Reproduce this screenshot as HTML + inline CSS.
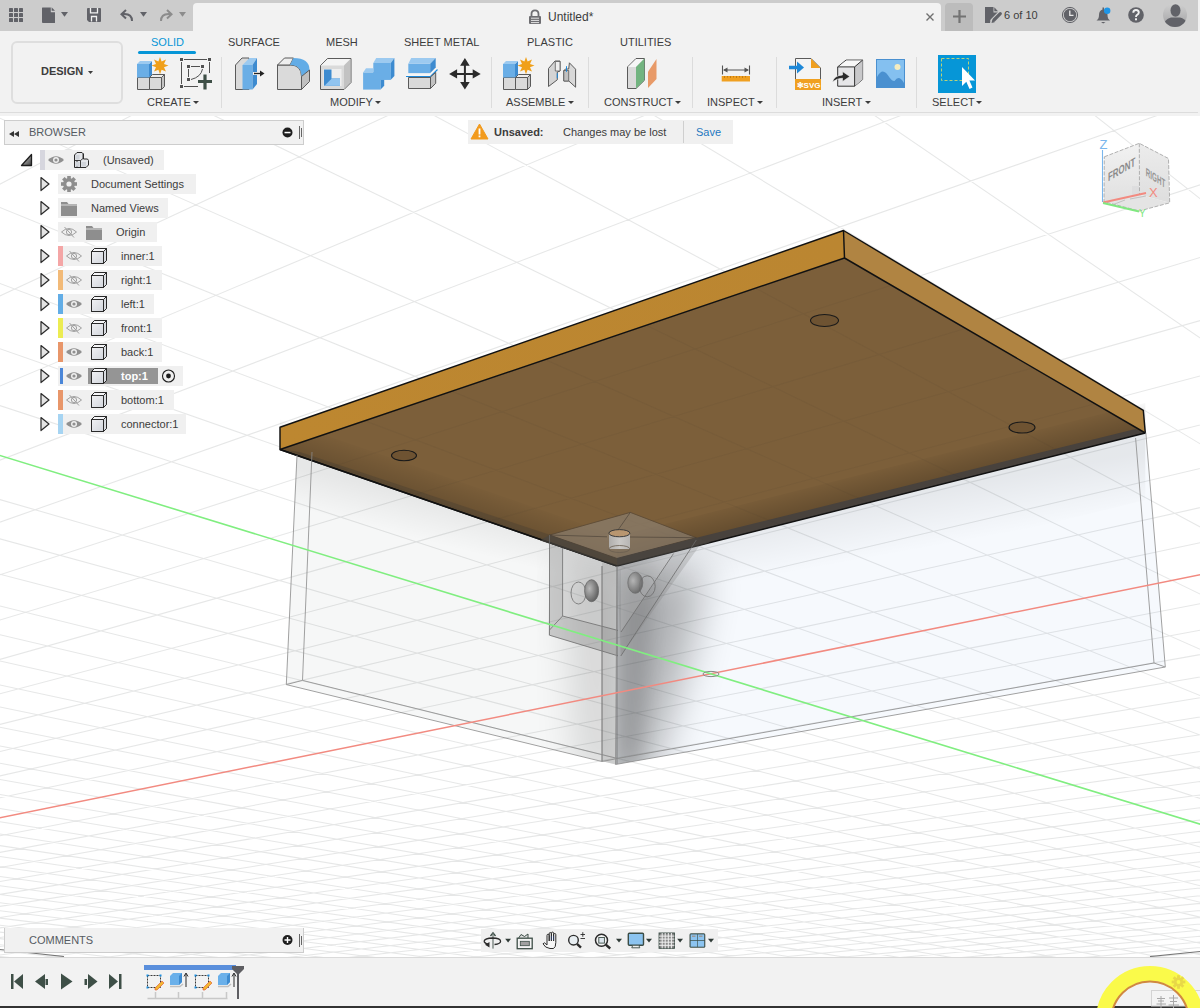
<!DOCTYPE html>
<html><head><meta charset="utf-8">
<style>
*{box-sizing:border-box}
html,body{margin:0;padding:0}
body{width:1200px;height:1008px;overflow:hidden;position:relative;background:#f2f2f2;font-family:"Liberation Sans",sans-serif;color:#3c3c3c}
.a{position:absolute}
.t{position:absolute;white-space:nowrap;line-height:1}
svg{position:absolute;overflow:visible}
</style></head><body>
<!-- top bar -->
<div class="a" style="left:0;top:0;width:1198px;height:31px;background:#cccccc"></div>
<div class="a" style="left:193px;top:3px;width:748px;height:28px;background:#f2f2f2;border-radius:4px 4px 0 0"></div>
<div class="a" style="left:945px;top:3px;width:28px;height:28px;background:#bcbcbc;border-radius:4px 4px 0 0"></div>
<svg width="1200" height="31" style="left:0;top:0">
<g fill="#616268">
<rect x="9" y="8" width="4" height="4" rx="0.6"/><rect x="14" y="8" width="4" height="4" rx="0.6"/><rect x="19" y="8" width="4" height="4" rx="0.6"/>
<rect x="9" y="13" width="4" height="4" rx="0.6"/><rect x="14" y="13" width="4" height="4" rx="0.6"/><rect x="19" y="13" width="4" height="4" rx="0.6"/>
<rect x="9" y="18" width="4" height="4" rx="0.6"/><rect x="14" y="18" width="4" height="4" rx="0.6"/><rect x="19" y="18" width="4" height="4" rx="0.6"/>
<path d="M42.5 7.5H50.8V12.2H55V22.5Q55 23 54.5 23H43Q42 23 42 22.3V8Q42 7.5 42.5 7.5Z"/><path d="M51.6 7.2L55 10.8H51.6Z"/>
<path d="M61 12H68L64.5 16.8Z"/>
<path d="M88 8H100Q101 8 101 9V21Q101 22 100 22H89L87 20V9Q87 8 88 8Z"/>
<path d="M140 12H147L143.5 16.8Z"/>
</g>
<g fill="none" stroke="#f0f0f0" stroke-width="1.3"><path d="M90.5 8V12.8H97.5V8"/><path d="M91.5 21.5V16.5H96.5V21.5"/></g>
<path d="M132 21C132 16.5 129 14 124.5 14H122" fill="none" stroke="#616268" stroke-width="2"/>
<path d="M126 10L121.5 14.2L126 18.4" fill="none" stroke="#616268" stroke-width="2"/>
<path d="M161 21C161 16.5 164 14 168.5 14H171" fill="none" stroke="#8c8c8c" stroke-width="2"/>
<path d="M167 10L171.5 14.2L167 18.4" fill="none" stroke="#8c8c8c" stroke-width="2"/>
<path d="M179 12H186L182.5 16.8Z" fill="#8c8c8c"/>
<!-- lock -->
<path d="M531.5 16.5V14Q531.5 10.3 535 10.3Q538.5 10.3 538.5 14V16.5" fill="none" stroke="#6e6e72" stroke-width="1.8"/>
<rect x="529" y="16" width="12" height="8" rx="1" fill="#6e6e72"/>
<g stroke="#f0f0f0" stroke-width="0.9"><path d="M531 18.2H539M531 20.4H539M531 22.6H539"/></g>
<path d="M926.5 13.5L933.5 20.5M933.5 13.5L926.5 20.5" stroke="#707070" stroke-width="1.4"/>
<path d="M953 16.5H966M959.5 10V23" stroke="#737373" stroke-width="2.2"/>
<!-- doc edit -->
<path d="M985 7H993.5V12.5H998V14.5L990 22.5V23H985Z" fill="#616268"/>
<path d="M994.3 7.2L998 11.2H994.3Z" fill="#616268"/>
<path d="M993 21L1000.5 13.5" stroke="#cccccc" stroke-width="5.4" stroke-linecap="round"/>
<path d="M994 20L1000.3 13.7" stroke="#616268" stroke-width="3.2" stroke-linecap="round"/>
<path d="M991.5 23L992.3 19.8L994.7 22.2Z" fill="#616268"/>
<!-- clock -->
<circle cx="1070" cy="15" r="7.6" fill="none" stroke="#616268" stroke-width="1"/>
<circle cx="1070" cy="15" r="6.2" fill="#616268"/>
<path d="M1069.8 10.5V15.3H1073.5" fill="none" stroke="#e8e8e8" stroke-width="1.3"/>
<!-- bell -->
<path d="M1096.5 20.5Q1099 19 1099 15Q1099 10.5 1102.5 9.5V7.5H1104V9.5Q1107.5 10.5 1107.5 15Q1107.5 19 1110 20.5Z" fill="#616268"/>
<path d="M1101 22H1105.5L1103.2 23.5Z" fill="#616268"/>
<circle cx="1107.2" cy="10.8" r="3.2" fill="#1e95e6"/>
<!-- help -->
<circle cx="1136" cy="15" r="7.8" fill="#616268"/>
<path d="M1133.3 12.8Q1133.3 10 1136 10Q1138.8 10 1138.8 12.6Q1138.8 14 1137.2 14.8Q1136 15.5 1136 17" fill="none" stroke="#f0f0f0" stroke-width="1.9"/>
<rect x="1135" y="18.3" width="2" height="2" fill="#f0f0f0"/>
<!-- avatar -->
<defs><linearGradient id="avg" x1="0" y1="0" x2="0" y2="1"><stop offset="0" stop-color="#d0d0d0"/><stop offset="1" stop-color="#a2a2a4"/></linearGradient>
<clipPath id="avc"><circle cx="1175" cy="15" r="12"/></clipPath></defs>
<circle cx="1175" cy="15" r="12" fill="url(#avg)"/>
<g clip-path="url(#avc)" fill="#616268"><ellipse cx="1175.5" cy="10.5" rx="5" ry="6.2"/><path d="M1163 27Q1164 19 1171 17.5H1180Q1187 19 1188 27Z"/></g>
</svg>
<div class="t" style="left:548px;top:11px;font-size:12px;color:#3c3c3c">Untitled*</div>
<div class="t" style="left:1004px;top:9.6px;font-size:11px;color:#3c3c3c">6 of 10</div>
<!-- toolbar -->
<div class="a" style="left:0;top:112px;width:1198px;height:1px;background:#dcdcdc"></div>
<div class="a" style="left:11px;top:41px;width:112px;height:63px;border:2px solid #dedede;border-radius:6px"></div>
<div class="t" style="left:41px;top:66px;font-size:11px;font-weight:bold;color:#3c3c3c">DESIGN</div>
<div class="t" style="left:151px;top:37px;font-size:11px;color:#0696d7">SOLID</div>
<div class="a" style="left:138px;top:51px;width:58px;height:3px;background:#0696d7;border-radius:2px"></div>
<div class="t" style="left:228px;top:37px;font-size:11px">SURFACE</div>
<div class="t" style="left:326px;top:37px;font-size:11px">MESH</div>
<div class="t" style="left:404px;top:37px;font-size:11px">SHEET METAL</div>
<div class="t" style="left:527px;top:37px;font-size:11px">PLASTIC</div>
<div class="t" style="left:620px;top:37px;font-size:11px">UTILITIES</div>
<div class="t" style="left:147px;top:97px;font-size:11px">CREATE</div>
<div class="t" style="left:330px;top:97px;font-size:11px">MODIFY</div>
<div class="t" style="left:506px;top:97px;font-size:11px">ASSEMBLE</div>
<div class="t" style="left:604px;top:97px;font-size:11px">CONSTRUCT</div>
<div class="t" style="left:707px;top:97px;font-size:11px">INSPECT</div>
<div class="t" style="left:822px;top:97px;font-size:11px">INSERT</div>
<div class="t" style="left:932px;top:97px;font-size:11px">SELECT</div>
<svg width="1200" height="116" style="left:0;top:0">
<g fill="#3c3c3c">
<path d="M88 71H93L90.5 74Z"/>
<path d="M193 101H199L196 104Z"/>
<path d="M375 101H381L378 104Z"/>
<path d="M568 101H574L571 104Z"/>
<path d="M675 101H681L678 104Z"/>
<path d="M757 101H763L760 104Z"/>
<path d="M865 101H871L868 104Z"/>
<path d="M976 101H982L979 104Z"/>
</g>
<g fill="#dcdcdc"><rect x="221" y="57" width="1" height="51"/><rect x="491" y="57" width="1" height="51"/><rect x="588" y="57" width="1" height="51"/><rect x="692" y="57" width="1" height="51"/><rect x="776" y="57" width="1" height="51"/><rect x="916" y="57" width="1" height="51"/></g>
<!-- CREATE: new component -->
<path d="M137.5 89.5V77.5H149.5V89.5Z" fill="#dadada" stroke="#5a5a5a"/>
<path d="M149.5 89.5V77.5H161.5V89.5Z" fill="#dadada" stroke="#5a5a5a"/>
<path d="M149.5 77.5L152.5 74.5H164.5L161.5 77.5Z" fill="#eeeeee" stroke="#5a5a5a" stroke-linejoin="round"/>
<path d="M161.5 77.5L164.5 74.5V86.5L161.5 89.5Z" fill="#c4c4c4" stroke="#5a5a5a" stroke-linejoin="round"/>
<path d="M137 77.5V64L149 64V77.5Z" fill="#6aaee6"/>
<path d="M149 77.5V64L152 61V74.5Z" fill="#3d8bd0"/>
<path d="M137 64L140 61H152L149 64Z" fill="#9ccaf0"/>
<path d="M160 57L161.6 61.5L166 59.6L164 64L168.5 65.6L164 67.2L166 71.6L161.6 69.7L160 74.2L158.4 69.7L154 71.6L156 67.2L151.5 65.6L156 64L154 59.6L158.4 61.5Z" fill="#f0a01a"/>
<!-- sketch -->
<g fill="#505050"><rect x="180" y="58" width="3" height="3"/><rect x="208" y="58" width="3" height="3"/><rect x="180" y="85" width="3" height="3"/><rect x="187" y="65" width="3" height="3"/><rect x="201" y="65" width="3" height="3"/><rect x="187" y="78" width="3" height="3"/></g>
<g fill="none" stroke="#505050" stroke-width="1"><path d="M184 59.5H207M181.5 62V84M209.5 62V73M184 86.5H198M191 66.5H200M188.5 69V77M191 79.5Q201 77 202.5 69"/></g>
<path d="M198 81.5H212M205 74.5V89.5" stroke="#3e4f47" stroke-width="3.2"/>
<!-- MODIFY: press pull -->
<path d="M235.5 89.5V65L242 58H249V89.5Z" fill="#dadada" stroke="#5a5a5a" stroke-linejoin="round"/>
<path d="M242.5 89.5V65H252.5V89.5Z" fill="#6aaee6"/>
<path d="M242.5 65L249.5 58H257L252.5 65Z" fill="#9ccaf0"/>
<path d="M252.5 65L257 58V84L252.5 89.5Z" fill="#3d8bd0"/>
<path d="M253 73.5H261" stroke="#f2f2f2" stroke-width="3"/>
<path d="M254 73.5H261" stroke="#222" stroke-width="1.3"/><path d="M264.5 73.5L260 70.6V76.4Z" fill="#222"/>
<!-- fillet -->
<path d="M277.5 89.5V65H290Q301.5 65 301.5 76.5V89.5Z" fill="#dadada" stroke="#5a5a5a"/>
<path d="M277.5 65L284.5 58H293.5L290 65Z" fill="#eeeeee" stroke="#5a5a5a" stroke-linejoin="round"/>
<path d="M290 65Q301.5 65 301.5 76.5L309.5 70Q309.5 58 293.5 58Z" fill="#62ace6"/>
<path d="M301.5 76.5L309.5 70V81.5L301.5 89.5Z" fill="#c0c0c0" stroke="#5a5a5a" stroke-linejoin="round"/>
<!-- shell -->
<path d="M320.5 89.5V65.5L327.5 58.5H351V82.5L344 89.5Z" fill="#dadada" stroke="#5a5a5a" stroke-linejoin="round"/>
<path d="M321 65.5L327.7 59H350.5L344 65.5Z" fill="#f4f4f4"/>
<path d="M344 65.5L350.5 59V82.3L344 89Z" fill="#c2c2c2"/>
<rect x="323.5" y="69" width="18" height="17" fill="#eeeeee"/>
<path d="M324 69.5H331.5V78.5H340V85.8H324Z" fill="#3d8bd0"/>
<path d="M324.5 85.8L331.8 78.5H340V85.8Z" fill="#90c4f0"/>
<!-- combine -->
<path d="M373.3 80V63H390.8V79.7Z" fill="#6aaee6"/>
<path d="M373.3 63L376.2 58.1H394.4L390.8 63Z" fill="#9ccaf0"/>
<path d="M390.8 63L394.4 58.1V76L390.8 79.7Z" fill="#3d8bd0"/>
<path d="M363.1 89.6V72.4H380.6V89.6Z" fill="#6aaee6"/>
<path d="M363.1 72.4L366 68.3H373.3V72.4Z" fill="#9ccaf0"/>
<path d="M380.6 79.7H384.2V85.8L380.6 89.6Z" fill="#3d8bd0"/>
<rect x="373.3" y="72.4" width="17.5" height="7.3" fill="#6aaee6"/>
<!-- split -->
<path d="M408.3 73.1V63.7H430.2V73.1Z" fill="#6aaee6"/>
<path d="M408.3 63.7L411.2 58.1H435.7L430.2 63.7Z" fill="#9ccaf0"/>
<path d="M430.2 63.7L435.7 58.1V67.5L430.2 73.1Z" fill="#3d8bd0"/>
<path d="M406 75.5H430.5L437.5 68.5" fill="none" stroke="#f8f8f8" stroke-width="2.2"/>
<path d="M406 76.5H430.5L437.5 69.5" fill="none" stroke="#1e88d8" stroke-width="1.2"/>
<path d="M408.5 88.5V77.5H430.5V88.5Z" fill="#dadada" stroke="#5a5a5a"/>
<path d="M430.5 88.5V77L435.7 72.4V83.3Z" fill="#c2c2c2" stroke="#5a5a5a" stroke-linejoin="round"/>
<!-- move -->
<path d="M464.9 63V85M455 73.9H475" stroke="#2b2b2b" stroke-width="2"/>
<path d="M464.9 58.1L460.1 65.8H469.7Z M464.9 89.6L460.1 81.9H469.7Z M449.1 73.9L457.1 69.2V78.6Z M480.7 73.9L472.7 69.2V78.6Z" fill="#2b2b2b"/>
<!-- ASSEMBLE -->
<g transform="translate(366 0)">
<path d="M137.5 89.5V77.5H149.5V89.5Z" fill="#dadada" stroke="#5a5a5a"/>
<path d="M149.5 89.5V77.5H161.5V89.5Z" fill="#dadada" stroke="#5a5a5a"/>
<path d="M149.5 77.5L152.5 74.5H164.5L161.5 77.5Z" fill="#eeeeee" stroke="#5a5a5a" stroke-linejoin="round"/>
<path d="M161.5 77.5L164.5 74.5V86.5L161.5 89.5Z" fill="#c4c4c4" stroke="#5a5a5a" stroke-linejoin="round"/>
<path d="M137 77.5V64L149 64V77.5Z" fill="#6aaee6"/>
<path d="M149 77.5V64L152 61V74.5Z" fill="#3d8bd0"/>
<path d="M137 64L140 61H152L149 64Z" fill="#9ccaf0"/>
<path d="M160 57L161.6 61.5L166 59.6L164 64L168.5 65.6L164 67.2L166 71.6L161.6 69.7L160 74.2L158.4 69.7L154 71.6L156 67.2L151.5 65.6L156 64L154 59.6L158.4 61.5Z" fill="#f0a01a"/>
</g>
<!-- joint -->
<path d="M548.5 86.5V68.5L555 61H560V71L557.3 72V79.8Z" fill="#d4d4d4" stroke="#5a5a5a" stroke-linejoin="round"/>
<path d="M555.3 61.5H560V71H555.3Z" fill="#eeeeee" stroke="#5a5a5a" stroke-width="0.8"/>
<path d="M557.3 73.2V78.2" stroke="#1e88d8" stroke-width="1"/>
<path d="M569.4 62.8L575.6 69.2V87.2L568.8 81H563.8V70.5L565.8 69H568.7Z" fill="#d8d8d8" stroke="#5a5a5a" stroke-linejoin="round"/>
<path d="M563.8 70.5H568.7V81H563.8Z" fill="#c0c0c0" stroke="#5a5a5a" stroke-width="0.8"/>
<path d="M566.5 66.2V71.8" stroke="#1e88d8" stroke-width="1"/>
<!-- CONSTRUCT -->
<path d="M627.5 88.5V67L636 58.5H644.4V80.3L636 88.5Z" fill="#dadada" stroke="#5a5a5a" stroke-linejoin="round"/>
<path d="M628 67L636.2 59H644L636 67Z" fill="#f6f6f6"/>
<path d="M636 88.5V67L644.4 58.5V80.3Z" fill="#72b480"/>
<path d="M648 88V71.8L656.5 59.1V78.9Z" fill="#e89a68"/>
<!-- INSPECT -->
<path d="M722.5 65.5V74.5M749.5 65.5V74.5M724 70H748" stroke="#555" stroke-width="1.1"/>
<path d="M723 70L727.5 67.5V72.5ZM749 70L744.5 67.5V72.5Z" fill="#555"/>
<rect x="721.7" y="76" width="28.3" height="5.5" fill="#f0a020"/>
<g stroke="#b87410" stroke-width="0.8"><path d="M724.5 76V78M727.5 76V77.5M730.5 76V78M733.5 76V77.5M736.5 76V78M739.5 76V77.5M742.5 76V78M745.5 76V77.5"/></g>
<!-- INSERT svg -->
<path d="M795.5 80V58.5H811L820.5 68V80" fill="#f4f4f4" stroke="#5a5a5a"/>
<path d="M811 58.5L820.5 68H811Z" fill="#f0a020"/>
<rect x="795" y="79" width="26" height="11" fill="#f0a020"/>
<text x="808.5" y="88" font-size="8" font-weight="bold" fill="#fff" text-anchor="middle" font-family="Liberation Sans">✻SVG</text>
<path d="M789 67.5H798" stroke="#1e88d8" stroke-width="3.5"/><path d="M797 61.5L804 67.5L797 73.5Z" fill="#1e88d8"/>
<!-- insert mesh -->
<path d="M837.7 86.2V66.9L846 60.1H862.6V79.5L854.6 86.2Z" fill="#e6e6e8" stroke="#333" stroke-linejoin="round"/>
<path d="M838.2 66.9L846.2 60.6H862L854.6 66.9Z" fill="#f8f8f8"/>
<path d="M854.6 86.2V66.9L862.6 60.1V79.5Z" fill="#c8c8ca"/>
<path d="M837.7 66.9H854.6V86.2M854.6 66.9L862.6 60.1" fill="none" stroke="#333" stroke-linejoin="round"/>
<path d="M832.5 82Q834 75.5 842.5 75V71.5L849.8 76.5L842.5 81.5V78.2Q836.5 78.5 832.5 82Z" fill="#2b2b2b" stroke="#f2f2f2" stroke-width="0.6"/>
<!-- image -->
<rect x="876.5" y="59.5" width="28" height="28" fill="#84c0f0" stroke="#4a90d0" stroke-width="1"/>
<path d="M877 87V77Q880 71.5 882.8 71.5Q886 71.5 889.5 77.5Q892.5 81.5 894.5 81Q896.5 78 898.5 78Q901 78 904 83V87Z" fill="#4a90d0"/>
<circle cx="897.5" cy="67" r="3" fill="#f4ecc0"/>
<!-- SELECT -->
<rect x="938" y="55" width="38" height="38" fill="#0696d7"/>
<rect x="941.5" y="58.5" width="27" height="22" fill="none" stroke="#b8d27a" stroke-width="1" stroke-dasharray="3 2"/>
<path d="M962 67V86L966.3 81.7L969.5 89L972.5 87.6L969.4 80.5H975Z" fill="#fff"/>
</svg>
<!-- viewport -->
<svg width="1200" height="841" viewBox="0 116 1200 841" style="left:0;top:116px;overflow:hidden">
<defs>
<linearGradient id="gBR" gradientUnits="userSpaceOnUse" x1="617" y1="0" x2="725" y2="0">
<stop offset="0" stop-color="#000" stop-opacity="0.42"/><stop offset="0.2" stop-color="#000" stop-opacity="0.33"/><stop offset="0.5" stop-color="#000" stop-opacity="0.12"/><stop offset="1" stop-color="#000" stop-opacity="0"/>
</linearGradient>
<linearGradient id="gBL" gradientUnits="userSpaceOnUse" x1="602" y1="0" x2="540" y2="0">
<stop offset="0" stop-color="#000" stop-opacity="0.2"/><stop offset="0.5" stop-color="#000" stop-opacity="0.07"/><stop offset="1" stop-color="#000" stop-opacity="0"/>
</linearGradient>
<linearGradient id="gV" gradientUnits="userSpaceOnUse" x1="0" y1="560" x2="0" y2="770">
<stop offset="0" stop-color="#fff"/><stop offset="0.5" stop-color="#fff" stop-opacity="0.9"/><stop offset="1" stop-color="#fff" stop-opacity="0.7"/>
</linearGradient>
<mask id="mV"><rect x="0" y="116" width="1200" height="839" fill="url(#gV)"/></mask>
<linearGradient id="gTop" gradientUnits="userSpaceOnUse" x1="0" y1="0" x2="0" y2="1">
<stop offset="0" stop-color="#000" stop-opacity="0.14"/><stop offset="1" stop-color="#000" stop-opacity="0"/>
</linearGradient>
<linearGradient id="gTL" gradientUnits="userSpaceOnUse" x1="450" y1="505" x2="440" y2="545">
<stop offset="0" stop-color="#000" stop-opacity="0.13"/><stop offset="1" stop-color="#000" stop-opacity="0"/>
</linearGradient>
<linearGradient id="gTR" gradientUnits="userSpaceOnUse" x1="880" y1="500" x2="890" y2="555">
<stop offset="0" stop-color="#000" stop-opacity="0.1"/><stop offset="1" stop-color="#000" stop-opacity="0"/>
</linearGradient>
<linearGradient id="bot" gradientUnits="userSpaceOnUse" x1="700" y1="280" x2="640" y2="540">
<stop offset="0" stop-color="#7b5d38"/><stop offset="0.7" stop-color="#775a37"/><stop offset="1" stop-color="#6a5237"/>
</linearGradient>
<linearGradient id="sideL" gradientUnits="userSpaceOnUse" x1="280" y1="0" x2="844" y2="0">
<stop offset="0" stop-color="#bd8730"/><stop offset="1" stop-color="#bb8631"/>
</linearGradient>
<linearGradient id="gEdgeR" gradientUnits="userSpaceOnUse" x1="880" y1="465" x2="888.7" y2="500">
<stop offset="0" stop-color="#000" stop-opacity="0"/><stop offset="1" stop-color="#000" stop-opacity="0.24"/>
</linearGradient>
<linearGradient id="gEdgeL" gradientUnits="userSpaceOnUse" x1="460" y1="478" x2="449.7" y2="508">
<stop offset="0" stop-color="#000" stop-opacity="0"/><stop offset="1" stop-color="#000" stop-opacity="0.16"/>
</linearGradient>
<clipPath id="cPL"><path d="M280 449.5L844.5 258L1145.3 433L617 566Z"/></clipPath>
<clipPath id="cBW"><path d="M617 566L1145.3 433L1165.3 667L615.5 764.5Z"/></clipPath>
<clipPath id="cLW"><path d="M297 455.4L617 566L615.5 764.5L286.3 684.6Z"/></clipPath>
</defs>
<rect x="0" y="116" width="1200" height="841" fill="#fff"/>
<!-- walls -->
<path d="M617 566L1145.3 433L1165.3 667L615.5 764.5Z" fill="#f6f9fd"/>
<path d="M297 455.4L617 566L615.5 764.5L286.3 684.6Z" fill="#f6f7f7"/>
<!-- shadows -->
<defs><filter id="blur1" x="-50%" y="-50%" width="200%" height="200%"><feGaussianBlur stdDeviation="20"/></filter>
<filter id="blur2" x="-50%" y="-50%" width="200%" height="200%"><feGaussianBlur stdDeviation="9"/></filter></defs>
<g clip-path="url(#cBW)">
<path d="M605 570L705 570L690 650L650 780L605 780Z" fill="#000" opacity="0.29" filter="url(#blur1)"/>
<path d="M612 560L655 560L640 780L612 780Z" fill="#000" opacity="0.14" filter="url(#blur2)"/>
</g>
<g clip-path="url(#cLW)">
<path d="M565 560L620 560L620 780L580 780Z" fill="#000" opacity="0.14" filter="url(#blur1)"/>
<rect x="602" y="430" width="16" height="340" fill="#000" opacity="0.1"/>
</g>
<g clip-path="url(#cLW)"><path d="M280 449.5L617 566V610L280 500Z" fill="url(#gTL)" opacity="0.5"/></g>
<g clip-path="url(#cBW)"><path d="M617 566L1145.3 433V500L617 630Z" fill="url(#gTR)" opacity="0.7"/></g>
<path d="M-1500.4 822.2L525.3 1024.8M-1491.6 815.0L547.4 1023.0M-1482.6 807.6L569.9 1021.3M-1473.1 799.9L592.8 1019.5M-1463.4 791.9L616.2 1017.7M-1453.2 783.5L639.9 1015.8M-1442.7 774.9L664.1 1014.0M-1431.7 765.9L688.7 1012.1M-1420.2 756.5L713.8 1010.1M-1408.3 746.8L739.4 1008.1M-1395.9 736.6L765.4 1006.1M-1382.9 726.0L792.0 1004.0M-1369.3 714.9L819.1 1001.9M-1355.1 703.2L846.7 999.8M-1340.3 691.1L874.9 997.6M-1324.7 678.3L903.6 995.4M-1308.4 664.9L932.9 993.1M-1291.2 650.9L962.8 990.8M-1273.1 636.1L993.3 988.4M-1254.1 620.5L1024.5 986.0M-1234.0 604.1L1056.3 983.5M-1212.8 586.7L1088.8 981.0M-1190.4 568.3L1122.0 978.4M-1166.6 548.9L1156.0 975.8M-1141.4 528.2L1190.6 973.1M-1114.5 506.2L1226.1 970.3M-1085.9 482.8L1262.4 967.5M-1055.4 457.8L1299.4 964.6M-1022.7 431.0L1337.4 961.7M-987.6 402.3L1376.2 958.6M-949.9 371.4L1416.0 955.6M-909.2 338.1L1456.6 952.4M-865.1 302.0L1498.3 949.2M-817.4 262.9L1541.0 945.8M-708.5 173.8L1629.7 939.0M-646.1 122.6L1675.7 935.4M-577.2 66.3L1722.9 931.7M-500.9 3.8L1771.3 927.9M-415.9 -65.8L1821.0 924.1M-320.6 -143.9L1872.0 920.1M-212.9 -232.1L1924.4 916.0M-90.3 -332.4L1978.3 911.9M50.5 -447.7L2033.7 907.6M213.8 -581.4L2090.6 903.1M405.7 -738.5L2149.2 898.6M634.2 -925.6L2209.5 893.9M-1500.4 822.2L911.0 -1152.3M-1419.8 830.2L1084.0 -892.6M-1342.5 838.0L1222.9 -684.2M-1268.1 845.4L1336.9 -513.2M-1196.5 852.6L1432.1 -370.3M-1127.7 859.5L1512.9 -249.2M-1061.3 866.1L1582.2 -145.2M-997.3 872.5L1642.3 -55.0M-935.6 878.7L1695.0 24.1M-876.1 884.6L1741.6 94.0M-818.6 890.4L1783.0 156.1M-763.0 895.9L1820.1 211.8M-709.2 901.3L1853.5 261.9M-657.2 906.5L1883.8 307.3M-606.8 911.5L1911.3 348.6M-558.1 916.4L1936.4 386.3M-465.0 925.7L1980.7 452.7M-420.6 930.2L2000.3 482.1M-377.5 934.5L2018.5 509.4M-335.6 938.7L2035.3 534.7M-294.9 942.7L2051.0 558.3M-255.4 946.7L2065.7 580.3M-217.0 950.5L2079.4 600.9M-179.7 954.3L2092.3 620.2M-143.3 957.9L2104.4 638.3M-108.0 961.4L2115.8 655.4M-73.6 964.9L2126.5 671.5M-40.0 968.2L2136.7 686.7M-7.4 971.5L2146.3 701.1M24.4 974.7L2155.4 714.8M55.5 977.8L2164.0 727.7M85.7 980.8L2172.2 740.0M115.2 983.7L2180.0 751.7M144.0 986.6L2187.4 762.9M172.1 989.4L2194.5 773.5M199.6 992.2L2201.3 783.6M226.4 994.9L2207.7 793.3M252.6 997.5L2213.9 802.6M278.2 1000.0L2219.8 811.5M303.2 1002.5L2225.5 820.0M327.6 1005.0L2231.0 828.2M351.5 1007.4L2236.2 836.0M374.9 1009.7L2241.2 843.6M397.8 1012.0L2246.0 850.8M420.2 1014.2L2250.7 857.8M442.1 1016.4L2255.2 864.5M463.6 1018.6L2259.5 871.0M484.6 1020.7L2263.6 877.2M505.2 1022.7L2267.7 883.3M525.3 1024.8L2271.5 889.1" stroke="#303838" stroke-opacity="0.12" stroke-width="1.05" fill="none"/>
<!-- plate bottom -->
<path d="M280 449.5L844.5 258L1145.3 433L617 566Z" fill="#7c5f3a"/>
<path d="M617 566L1145.3 433L1145.3 403L617 536Z" fill="url(#gEdgeR)"/><path d="M280 449.5L617 566L617 536L280 419.5Z" fill="url(#gEdgeL)"/>
<path d="M617 557.5L1135.5 429L1145.3 433L617 566Z" fill="#48423d"/>
<path d="M300 452L617 557L617 566L280 449.5Z" fill="#4e4232" opacity="0.5"/>
<path d="M-1500.4 822.2L525.3 1024.8M-1491.6 815.0L547.4 1023.0M-1482.6 807.6L569.9 1021.3M-1473.1 799.9L592.8 1019.5M-1463.4 791.9L616.2 1017.7M-1453.2 783.5L639.9 1015.8M-1442.7 774.9L664.1 1014.0M-1431.7 765.9L688.7 1012.1M-1420.2 756.5L713.8 1010.1M-1408.3 746.8L739.4 1008.1M-1395.9 736.6L765.4 1006.1M-1382.9 726.0L792.0 1004.0M-1369.3 714.9L819.1 1001.9M-1355.1 703.2L846.7 999.8M-1340.3 691.1L874.9 997.6M-1324.7 678.3L903.6 995.4M-1308.4 664.9L932.9 993.1M-1291.2 650.9L962.8 990.8M-1273.1 636.1L993.3 988.4M-1254.1 620.5L1024.5 986.0M-1234.0 604.1L1056.3 983.5M-1212.8 586.7L1088.8 981.0M-1190.4 568.3L1122.0 978.4M-1166.6 548.9L1156.0 975.8M-1141.4 528.2L1190.6 973.1M-1114.5 506.2L1226.1 970.3M-1085.9 482.8L1262.4 967.5M-1055.4 457.8L1299.4 964.6M-1022.7 431.0L1337.4 961.7M-987.6 402.3L1376.2 958.6M-949.9 371.4L1416.0 955.6M-909.2 338.1L1456.6 952.4M-865.1 302.0L1498.3 949.2M-817.4 262.9L1541.0 945.8M-708.5 173.8L1629.7 939.0M-646.1 122.6L1675.7 935.4M-577.2 66.3L1722.9 931.7M-500.9 3.8L1771.3 927.9M-415.9 -65.8L1821.0 924.1M-320.6 -143.9L1872.0 920.1M-212.9 -232.1L1924.4 916.0M-90.3 -332.4L1978.3 911.9M50.5 -447.7L2033.7 907.6M213.8 -581.4L2090.6 903.1M405.7 -738.5L2149.2 898.6M634.2 -925.6L2209.5 893.9M-1500.4 822.2L911.0 -1152.3M-1419.8 830.2L1084.0 -892.6M-1342.5 838.0L1222.9 -684.2M-1268.1 845.4L1336.9 -513.2M-1196.5 852.6L1432.1 -370.3M-1127.7 859.5L1512.9 -249.2M-1061.3 866.1L1582.2 -145.2M-997.3 872.5L1642.3 -55.0M-935.6 878.7L1695.0 24.1M-876.1 884.6L1741.6 94.0M-818.6 890.4L1783.0 156.1M-763.0 895.9L1820.1 211.8M-709.2 901.3L1853.5 261.9M-657.2 906.5L1883.8 307.3M-606.8 911.5L1911.3 348.6M-558.1 916.4L1936.4 386.3M-465.0 925.7L1980.7 452.7M-420.6 930.2L2000.3 482.1M-377.5 934.5L2018.5 509.4M-335.6 938.7L2035.3 534.7M-294.9 942.7L2051.0 558.3M-255.4 946.7L2065.7 580.3M-217.0 950.5L2079.4 600.9M-179.7 954.3L2092.3 620.2M-143.3 957.9L2104.4 638.3M-108.0 961.4L2115.8 655.4M-73.6 964.9L2126.5 671.5M-40.0 968.2L2136.7 686.7M-7.4 971.5L2146.3 701.1M24.4 974.7L2155.4 714.8M55.5 977.8L2164.0 727.7M85.7 980.8L2172.2 740.0M115.2 983.7L2180.0 751.7M144.0 986.6L2187.4 762.9M172.1 989.4L2194.5 773.5M199.6 992.2L2201.3 783.6M226.4 994.9L2207.7 793.3M252.6 997.5L2213.9 802.6M278.2 1000.0L2219.8 811.5M303.2 1002.5L2225.5 820.0M327.6 1005.0L2231.0 828.2M351.5 1007.4L2236.2 836.0M374.9 1009.7L2241.2 843.6M397.8 1012.0L2246.0 850.8M420.2 1014.2L2250.7 857.8M442.1 1016.4L2255.2 864.5M463.6 1018.6L2259.5 871.0M484.6 1020.7L2263.6 877.2M505.2 1022.7L2267.7 883.3M525.3 1024.8L2271.5 889.1" stroke="#303838" stroke-opacity="0.06" stroke-width="1.05" fill="none" clip-path="url(#cPL)"/>
<!-- plate sides -->
<path d="M280 427.3L843.5 230.5L844.5 258L280 449.5Z" fill="url(#sideL)"/>
<path d="M843.5 230.5L1143.3 410.3L1145.3 433L844.5 258Z" fill="#b08442"/>
<g fill="none" stroke="#111" stroke-width="1.45" stroke-linejoin="round">
<path d="M280 449.5L280 427.3L843.5 230.5L1143.3 410.3L1145.3 433L617 566Z"/>
<path d="M280 449.5L844.5 258L1145.3 433M843.5 230.5L844.5 258"/>
<path d="M280 449.5L617 566"/>
</g>
<!-- holes -->
<g fill="#6e5332" stroke="#1a1a1a" stroke-width="1.1"><ellipse cx="404" cy="455.5" rx="12.5" ry="5.2"/><ellipse cx="824.5" cy="320.5" rx="14" ry="6"/><ellipse cx="1022" cy="427.5" rx="13" ry="5.5"/></g>
<!-- connector -->
<defs>
<radialGradient id="hole" cx="0.35" cy="0.4" r="0.7"><stop offset="0" stop-color="#b8b8b8"/><stop offset="0.6" stop-color="#808080"/><stop offset="1" stop-color="#5a5a5a"/></radialGradient>
<linearGradient id="cyl" x1="0" y1="0" x2="1" y2="0"><stop offset="0" stop-color="#b4b4b4"/><stop offset="0.5" stop-color="#d2d2d2"/><stop offset="1" stop-color="#bdbdbd"/></linearGradient>
</defs>
<path d="M549.5 535L630.3 512.4L696.3 537.7L617 558.5Z" fill="#8e8478" opacity="0.6" stroke="#4a4036" stroke-width="0.9"/>
<path d="M630.3 512.4L618 530M549.5 535L607 536.8M630 537L696.3 537.7" fill="none" stroke="#4a4036" stroke-width="0.9" opacity="0.7"/>
<path d="M549.5 535L617 558.5L696.3 537.7L710 542.7L617 566L540 540.5Z" fill="#4a4640" opacity="0.7"/>
<path d="M549.5 544L617 566L617.8 655.8L548.7 635.2Z" fill="#8a8a8a" opacity="0.2"/>
<path d="M549.5 544L562.6 548L562.6 616L617.8 630.4L617.8 655.8L548.7 635.2Z" fill="#707070" opacity="0.18"/>
<path d="M617 566L700 545L620.8 656Z" fill="#7a7a7a" opacity="0.26"/>
<path d="M621 570L674 554L643 600L621 632Z" fill="#fff" opacity="0.12"/>
<g fill="none" stroke="#6a6a6a" stroke-width="0.9" opacity="0.85">
<path d="M549.5 535V635.2L617.8 655.8M562.6 548V616L617.8 630.4M549.5 630L562.6 616"/>
<path d="M696.3 540L620.8 656M673.5 553.6L621 632"/>
<ellipse cx="578.5" cy="593" rx="7.5" ry="11"/>
<ellipse cx="647.2" cy="586.3" rx="8" ry="10.5"/>
</g>
<ellipse cx="591.6" cy="590.7" rx="7" ry="11" fill="url(#hole)" stroke="#666" stroke-width="0.8"/>
<ellipse cx="635.3" cy="582.8" rx="7.5" ry="10.5" fill="url(#hole)" stroke="#666" stroke-width="0.8" opacity="0.85"/>
<path d="M609 533.2V549H630V533.2Z" fill="url(#cyl)" opacity="0.9"/>
<ellipse cx="619.4" cy="549" rx="10.5" ry="3.5" fill="none" stroke="#6a5e50" stroke-width="0.8"/>
<ellipse cx="619.4" cy="533.2" rx="10.5" ry="3.6" fill="#b89670" stroke="#3a3a3a" stroke-width="1"/>
<path d="M617 566V764M602 566V761.5" stroke="#555" stroke-width="0.9" opacity="0.6"/>
<!-- wall edges -->
<g fill="none" stroke="#8a8a8a" stroke-width="1" opacity="0.8">
<path d="M297 455L286.3 684.6L602 761.5L602 566"/>
<path d="M312 452L302.5 680.4L617.5 758.5"/>
<path d="M617 566L615.5 764.5L1165.3 667L1145.8 432.5"/>
<path d="M617.5 758.5L1154 663L1135.6 438"/>
<path d="M286.3 684.6L302.5 680.4M602 761.5L617.5 758.5M1154 663L1165.3 667"/>
</g>
<!-- axes -->
<path d="M-510.8 921.1L1959.5 420.9" stroke="#f28a80" stroke-width="1.5"/>
<path d="M-765.4 220.3L1584.8 942.4" stroke="#80ee80" stroke-width="1.6"/>
<ellipse cx="711" cy="674" rx="8" ry="2.6" fill="none" stroke="#8a8a8a" stroke-width="1"/>
<path d="M0 949.5L64 956.5M1150 956.5L1200 951.5" stroke="#555" stroke-width="1.2" opacity="0.8"/>
<!-- viewcube -->
<defs>
<linearGradient id="vcF" x1="0" y1="0" x2="0" y2="1"><stop offset="0" stop-color="#f2f2f2"/><stop offset="1" stop-color="#e0e0e0"/></linearGradient>
<linearGradient id="vcR" x1="0" y1="0" x2="0" y2="1"><stop offset="0" stop-color="#ececec"/><stop offset="1" stop-color="#dedede"/></linearGradient>
</defs>
<path d="M1104.3 156.8L1139.3 143.3L1139.5 194.7L1104 201.7Z" fill="url(#vcF)"/>
<path d="M1139.3 143.3L1168.5 158.5L1169.7 202.8L1139.5 194.7Z" fill="url(#vcR)"/>
<path d="M1104 201.7L1139.5 194.7L1169.7 202.8L1139.3 211Z" fill="#e4e4e4"/>
<rect x="1132" y="186" width="7" height="9" fill="#d8d8da" opacity="0.6"/>
<g fill="none" stroke="#a8a8a8" stroke-width="0.9" stroke-dasharray="4 1.5">
<path d="M1104.3 156.8L1139.3 143.3L1168.5 158.5L1169.7 202.8L1139.3 211L1104 201.7Z"/>
<path d="M1139.3 143.3L1139.5 194.7"/>
</g>
<path d="M1112 205L1125 200M1130 199L1146 196" stroke="#b8b8b8" stroke-width="0.8"/>
<text transform="matrix(0.66 -0.39 0 1 1108 181.5)" font-size="12" font-weight="bold" fill="#8a8a8a" font-family="Liberation Sans">FRONT</text>
<text transform="matrix(0.52 0.33 0 1 1145.8 175.8)" font-size="12" font-weight="bold" fill="#959595" font-family="Liberation Sans">RIGHT</text>
<path d="M1102.5 150V202" stroke="#7ab6ec" stroke-width="1.1"/>
<path d="M1103 202.5L1146 193" stroke="#f28a80" stroke-width="1.8"/>
<path d="M1103 203L1139 211.5" stroke="#80e880" stroke-width="1.8"/>
<text x="1099.5" y="149" font-size="13" fill="#7ab6ec" font-family="Liberation Sans">Z</text>
<text x="1149" y="196.8" font-size="13" fill="#f28a80" font-family="Liberation Sans">X</text>
<text x="1139" y="217" font-size="10" fill="#80e880" font-family="Liberation Sans">Y</text>
</svg>
<!-- browser -->
<div class="a" style="left:4px;top:120px;width:300px;height:25px;background:#f1f1f1;border:1px solid #cdcdcd"></div>
<div class="t" style="left:29px;top:127px;font-size:11px;color:#555b62">BROWSER</div>
<div class="a" style="left:40px;top:150px;width:124px;height:20px;background:#f0f0f0"></div>
<div class="a" style="left:40px;top:150px;width:5px;height:20px;background:#d6d6de"></div>
<div class="a" style="left:58px;top:174px;width:138px;height:20px;background:#f0f0f0"></div>
<div class="a" style="left:58px;top:198px;width:110px;height:20px;background:#f0f0f0"></div>
<div class="a" style="left:58px;top:222px;width:99px;height:20px;background:#f0f0f0"></div>
<div class="a" style="left:58px;top:246px;width:104px;height:20px;background:#f0f0f0"></div>
<div class="a" style="left:58px;top:270px;width:104px;height:20px;background:#f0f0f0"></div>
<div class="a" style="left:58px;top:294px;width:96px;height:20px;background:#f0f0f0"></div>
<div class="a" style="left:58px;top:318px;width:104px;height:20px;background:#f0f0f0"></div>
<div class="a" style="left:58px;top:342px;width:104px;height:20px;background:#f0f0f0"></div>
<div class="a" style="left:58px;top:366px;width:125px;height:20px;background:#f0f0f0"></div>
<div class="a" style="left:58px;top:390px;width:116px;height:20px;background:#f0f0f0"></div>
<div class="a" style="left:58px;top:414px;width:128px;height:20px;background:#f0f0f0"></div>
<div class="a" style="left:58px;top:246px;width:5px;height:20px;background:#f4a6a6"></div>
<div class="a" style="left:58px;top:270px;width:5px;height:20px;background:#f2ba78"></div>
<div class="a" style="left:58px;top:294px;width:5px;height:20px;background:#62ade6"></div>
<div class="a" style="left:58px;top:318px;width:5px;height:20px;background:#ecec52"></div>
<div class="a" style="left:58px;top:342px;width:5px;height:20px;background:#e8966a"></div>
<div class="a" style="left:60px;top:368px;width:3px;height:16px;background:#4a86d8"></div>
<div class="a" style="left:58px;top:390px;width:5px;height:20px;background:#e8966a"></div>
<div class="a" style="left:58px;top:414px;width:5px;height:20px;background:#a6d4f2"></div>
<div class="a" style="left:88px;top:368px;width:70px;height:16px;background:#959595"></div>
<div class="t" style="left:103px;top:155px;font-size:11px">(Unsaved)</div>
<div class="t" style="left:91px;top:179px;font-size:11px">Document Settings</div>
<div class="t" style="left:91px;top:203px;font-size:11px">Named Views</div>
<div class="t" style="left:116px;top:227px;font-size:11px">Origin</div>
<div class="t" style="left:121px;top:251px;font-size:11px">inner:1</div>
<div class="t" style="left:121px;top:275px;font-size:11px">right:1</div>
<div class="t" style="left:121px;top:299px;font-size:11px">left:1</div>
<div class="t" style="left:121px;top:323px;font-size:11px">front:1</div>
<div class="t" style="left:121px;top:347px;font-size:11px">back:1</div>
<div class="t" style="left:121px;top:371px;font-size:11px;font-weight:bold;color:#fff">top:1</div>
<div class="t" style="left:121px;top:395px;font-size:11px">bottom:1</div>
<div class="t" style="left:121px;top:419px;font-size:11px">connector:1</div>
<svg width="310" height="440" style="left:0;top:0">
<defs>
<linearGradient id="bodyg" x1="0" y1="0" x2="1" y2="1"><stop offset="0" stop-color="#f4f4f6"/><stop offset="1" stop-color="#cfd3da"/></linearGradient>
<g id="eye"><path d="M-8 0Q0 -7.5 8 0Q0 7.5 -8 0Z" fill="#909090"/><circle r="3" fill="#f0f0f0"/><circle r="1.6" fill="#909090"/></g>
<g id="eyex"><path d="M-7.5 0Q0 -7 7.5 0Q0 7 -7.5 0Z" fill="none" stroke="#a0a0a0" stroke-width="1"/><circle r="2.6" fill="none" stroke="#a0a0a0" stroke-width="1"/><path d="M-4.5 -5L5 5.5" stroke="#a0a0a0" stroke-width="1"/></g>
<g id="body"><path d="M-7.5 -4.5L-4.5 -7.5H7.5V4.5L4.5 7.5H-7.5Z" fill="url(#bodyg)" stroke="#2a2a2a" stroke-width="1"/><path d="M-7.5 -4.5H4.5V7.5M4.5 -4.5L7.5 -7.5" fill="none" stroke="#2a2a2a" stroke-width="1"/><path d="M4.5 -4.5L7.5 -7.5V4.5L4.5 7.5Z" fill="#d8dbe0"/><path d="M-7.5 -4.5L-4.5 -7.5H7.5L4.5 -4.5Z" fill="#f6f6f8"/><path d="M-7.5 -4.5L-4.5 -7.5H7.5V4.5L4.5 7.5H-7.5ZM-7.5 -4.5H4.5V7.5M4.5 -4.5L7.5 -7.5" fill="none" stroke="#2a2a2a" stroke-width="1"/></g>
<g id="exp"><path d="M0 0L8 6.5L0 13Z" fill="#e4e4e4" stroke="#2b2b2b" stroke-width="1.2" stroke-linejoin="round"/></g>
</defs>
<path d="M19 131L14 134L19 137ZM14 131L9 134L14 137Z" fill="#333"/>
<circle cx="287.5" cy="132.5" r="5" fill="#1e1e1e"/><rect x="284.5" y="131.8" width="6" height="1.5" fill="#fff"/>
<path d="M299.5 126V139M301.5 128V137" stroke="#666" stroke-width="1"/>
<defs><linearGradient id="expg" x1="0" y1="0" x2="1" y2="1"><stop offset="0" stop-color="#e8e8e8"/><stop offset="1" stop-color="#3a3a3a"/></linearGradient></defs>
<path d="M31.5 154.5V165.5H21.5Z" fill="url(#expg)" stroke="#1e1e1e" stroke-width="1.3" stroke-linejoin="round"/>
<use href="#eye" x="56" y="160"/>
<path d="M74.5 167.5V155L77 152.5H82L83.5 154V159H87.5L88.5 160.5V165L86 167.5Z" fill="#e4e6ea" stroke="#2a2a2a" stroke-width="1" stroke-linejoin="round"/>
<path d="M74.5 160.5H80.5L83 158.5M80.5 160.5V167.5M77 160.5V167.5M83 153.5V158.5" fill="none" stroke="#2a2a2a" stroke-width="0.9"/>
<rect x="75.5" y="155" width="4" height="4.5" fill="#d0d4da"/><rect x="81.5" y="162" width="4.5" height="4.5" fill="#d0d4da"/><rect x="75.5" y="162" width="4" height="4.5" fill="#d0d4da"/>
<use href="#exp" x="41" y="177.5"/><use href="#exp" x="41" y="201.5"/><use href="#exp" x="41" y="225.5"/>
<use href="#exp" x="41" y="249.5"/><use href="#exp" x="41" y="273.5"/><use href="#exp" x="41" y="297.5"/><use href="#exp" x="41" y="321.5"/>
<use href="#exp" x="41" y="345.5"/><use href="#exp" x="41" y="369.5"/><use href="#exp" x="41" y="393.5"/><use href="#exp" x="41" y="417.5"/>
<!-- gear -->
<g transform="translate(69 184)" fill="#8e8e8e"><circle r="6"/><g id="teeth"><rect x="-1.8" y="-8" width="3.6" height="16"/><rect x="-1.8" y="-8" width="3.6" height="16" transform="rotate(45)"/><rect x="-1.8" y="-8" width="3.6" height="16" transform="rotate(90)"/><rect x="-1.8" y="-8" width="3.6" height="16" transform="rotate(135)"/></g><circle r="2.6" fill="#f0f0f0"/></g>
<path d="M61 202H67L68.5 204H77V216H61Z" fill="#8e8e8e"/><path d="M61 205H77" stroke="#f0f0f0" stroke-width="0.8"/>
<use href="#eyex" x="69" y="232"/>
<path d="M86 226H92L93.5 228H102V240H86Z" fill="#8e8e8e"/><path d="M86 229H102" stroke="#f0f0f0" stroke-width="0.8"/>
<use href="#eyex" x="74" y="256"/><use href="#eyex" x="74" y="280"/><use href="#eye" x="74" y="304"/><use href="#eyex" x="74" y="328"/>
<use href="#eye" x="74" y="352"/><use href="#eye" x="74" y="376"/><use href="#eyex" x="74" y="400"/><use href="#eye" x="74" y="424"/>
<use href="#body" x="99" y="256"/><use href="#body" x="99" y="280"/><use href="#body" x="99" y="304"/><use href="#body" x="99" y="328"/>
<use href="#body" x="99" y="352"/><use href="#body" x="99" y="376"/><use href="#body" x="99" y="400"/><use href="#body" x="99" y="424"/>
<circle cx="168.5" cy="376" r="6" fill="#f0f0f0" stroke="#1e1e1e" stroke-width="1.1"/><circle cx="168.5" cy="376" r="2.4" fill="#1e1e1e"/>
</svg>
<!-- notification -->
<div class="a" style="left:468px;top:120px;width:265px;height:24px;background:#f0f0f0"></div>
<div class="a" style="left:683px;top:121px;width:1px;height:22px;background:#cfcfcf"></div>
<svg width="20" height="20" style="left:470px;top:122px"><path d="M9.5 2L18 17H1Z" fill="#f29a1c" stroke="#f29a1c" stroke-width="1" stroke-linejoin="round"/><rect x="8.6" y="6.5" width="1.8" height="6" fill="#fff"/><rect x="8.6" y="13.5" width="1.8" height="1.8" fill="#fff"/></svg>
<div class="t" style="left:494px;top:127px;font-size:11px;font-weight:bold">Unsaved:</div>
<div class="t" style="left:563px;top:127px;font-size:11px">Changes may be lost</div>
<div class="t" style="left:696px;top:127px;font-size:11px;color:#1f78c0">Save</div>
<!-- comments -->
<div class="a" style="left:4px;top:928px;width:300px;height:25px;background:#f1f1f1;border:1px solid #cdcdcd;border-top:0"></div>
<div class="t" style="left:29px;top:935px;font-size:11px;color:#555b62">COMMENTS</div>
<svg width="310" height="30" style="left:0;top:925px">
<circle cx="287.5" cy="15" r="5" fill="#1e1e1e"/><path d="M284.5 15H290.5M287.5 12V18" stroke="#fff" stroke-width="1.4"/>
<path d="M299.5 9V22M301.5 11V20" stroke="#666" stroke-width="1"/>
</svg>
<!-- nav bar -->
<div class="a" style="left:481px;top:929px;width:237px;height:23px;background:#f0f0f0"></div>
<svg width="240" height="26" style="left:480px;top:927px">
<g fill="#2f3a36"><path d="M25.2 11.8H31L28.1 15.4Z"/><path d="M136 11.8H142L139 15.4Z"/><path d="M166 11.8H172L169 15.4Z"/><path d="M197.2 11.8H203L200.1 15.4Z"/><path d="M228 11.8H234L231 15.4Z"/></g>
<path d="M13 21.5V6.5M10.5 9L13 5.8L15.5 9" fill="none" stroke="#3a4a44" stroke-width="1.3"/>
<path d="M13 21.5V6.5" stroke="#f4f4f4" stroke-width="0.6"/>
<path d="M8 17.2Q4 16 4.2 14Q5 11.2 12.5 11Q20.5 11 20.6 14.2Q20.5 16.8 14.5 17.5" fill="none" stroke="#2b2b2b" stroke-width="1.3"/>
<path d="M5 17.8L9.5 15V20.5Z" fill="#2b2b2b"/>
<path d="M38 12L41 7.5L44.5 9.5L48 7V11" fill="#e2e2e2" stroke="#3c4d46" stroke-width="1"/>
<rect x="37.2" y="11.2" width="15" height="10.5" fill="#f4f4f4" stroke="#3c4d46" stroke-width="1.3"/><rect x="40.3" y="14.3" width="9" height="4.4" fill="#a0a0a0" stroke="#3c4d46" stroke-width="0.8"/>
<path d="M70 21.5Q65 21 63 16.8L64.5 15.8L67 18V8.5Q67 7.2 68.1 7.2Q69.2 7.2 69.2 8.5V14V6.8Q69.2 5.5 70.3 5.5Q71.4 5.5 71.4 6.8V14V6.3Q71.4 5.1 72.5 5.1Q73.6 5.1 73.6 6.3V14V7.6Q73.6 6.5 74.7 6.5Q75.8 6.5 75.8 7.6V15.5Q75.8 20.5 73.5 21.5Z" fill="#f6f6f6" stroke="#2b2b2b" stroke-width="1"/>
<path d="M71.4 9V13M73.6 9V13" stroke="#2b4a9a" stroke-width="0.5"/>
<circle cx="93.5" cy="13.2" r="4.8" fill="#e8eef2" stroke="#2b2b2b" stroke-width="1.4"/><path d="M97 16.8L101 20.6" stroke="#2b2b2b" stroke-width="2.4"/><path d="M100.5 7.5H105M102.8 5.2V9.8M100.5 11.5H105" stroke="#2b2b2b" stroke-width="0.9"/>
<circle cx="121.5" cy="13.2" r="6" fill="#f4f4f4" stroke="#2b2b2b" stroke-width="1.5"/><rect x="118.8" y="10.5" width="5.6" height="5.6" fill="#dde6ee" stroke="#3c4d46" stroke-width="0.9"/><path d="M125.8 17.6L130.2 21.5" stroke="#2b2b2b" stroke-width="2.4"/>
<rect x="148.3" y="6.2" width="15.2" height="12" rx="1" fill="#8cc4f0" stroke="#3c4d46" stroke-width="1.4"/><path d="M152.5 18.8L151.8 20.8H159.8L159 18.8" fill="#eee" stroke="#3c4d46" stroke-width="0.9"/>
<rect x="179.1" y="6" width="15.3" height="15.3" fill="#8a8a8a" stroke="#3c4d46" stroke-width="1"/>
<path d="M182.2 6V21.3M185.2 6V21.3M188.3 6V21.3M191.4 6V21.3M179.1 9.1H194.4M179.1 12.1H194.4M179.1 15.2H194.4M179.1 18.3H194.4" stroke="#f0f0f0" stroke-width="1"/>
<rect x="209.5" y="6.3" width="15.8" height="14.5" rx="1.5" fill="#3c4d46"/>
<rect x="210.6" y="7.4" width="6.5" height="5.7" fill="#8cc4f0"/><rect x="217.7" y="7.4" width="6.5" height="5.7" fill="#8cc4f0"/><rect x="210.6" y="13.8" width="6.5" height="5.9" fill="#8cc4f0"/><rect x="217.7" y="13.8" width="6.5" height="5.9" fill="#8cc4f0"/>
<path d="M212 9.2H215.5M219 9.2H222.5" stroke="#9a9a9a" stroke-width="1.5"/>
</svg>
<!-- timeline -->
<div class="a" style="left:0;top:957px;width:1200px;height:1px;background:#dadada"></div>
<div class="a" style="left:0;top:1006px;width:1200px;height:2px;background:#333"></div>
<svg width="1200" height="52" style="left:0;top:956px">
<g fill="#3e4f47">
<rect x="11" y="18" width="2.5" height="15"/><path d="M14 25.5L23 18V33Z"/>
<path d="M35 25.5L45 18V33Z"/><rect x="45.5" y="23" width="2.5" height="6"/>
<path d="M61 17.5L72.5 25.5L61 33.5Z"/>
<rect x="84.5" y="23" width="2.5" height="6"/><path d="M88 18L97.5 25.5L88 33Z"/>
<path d="M109 18L118 25.5L109 33Z"/><rect x="119" y="18" width="2.5" height="15"/>
</g>
<rect x="144" y="9" width="92" height="5" fill="#5a8fdc"/>
<path d="M232 10H244V13L239 18V43H237V18L232 13Z" fill="#5e5e62"/>
<path d="M147.5 42.5H227.5M155.5 36V42M178.5 36V42M202.5 36V42M226.5 36V42" stroke="#c8c8c8" stroke-width="1.5" fill="none"/>
<g id="tsk"><rect x="147.5" y="19.5" width="13" height="12" fill="none" stroke="#3a3a3a" stroke-width="1" stroke-dasharray="2 1"/><rect x="146.5" y="18.5" width="2" height="2" fill="#1a8ee0"/><rect x="159.5" y="18.5" width="2" height="2" fill="#1a8ee0"/><rect x="146.5" y="30.5" width="2" height="2" fill="#1a8ee0"/><path d="M155 32L162 25L164 27L157 34H155Z" fill="#f2b830" stroke="#e05030" stroke-width="0.6"/></g>
<use href="#tsk" x="48"/>
<g id="tex"><path d="M170 29V20L173 17H182V26L179 29Z" fill="#6ab0ea"/><path d="M179 29V20L182 17V26Z" fill="#3d8bd0"/><path d="M170 30.5H180L183 28" fill="none" stroke="#c0c0c0" stroke-width="1.5"/><path d="M186 31V18M184 20.5L186 17L188 20.5" fill="none" stroke="#2b2b2b" stroke-width="1"/></g>
<use href="#tex" x="48"/>
</svg>
<!-- yellow circle -->
<svg width="200" height="60" style="left:1000px;top:948px">
<rect x="151.5" y="42.5" width="50" height="15.5" fill="#f4f4f4" stroke="#d4d4d4" stroke-width="1"/>
<path d="M157 50.5H165M158 53H164M156.5 56H166M161 48V60M169 50H178M170 53.5H177M173.5 47V60M168.5 57H179" stroke="#a8a8a8" stroke-width="1" fill="none"/>
<circle cx="150" cy="72" r="46.5" fill="none" stroke="#fafa4a" stroke-width="15"/>
<circle cx="150" cy="72" r="38.6" fill="none" stroke="#d08840" stroke-width="2"/>
<g transform="translate(178.5 34)" fill="#e8d848"><circle r="4.6"/><rect x="-1.4" y="-6.8" width="2.8" height="13.6"/><rect x="-1.4" y="-6.8" width="2.8" height="13.6" transform="rotate(45)"/><rect x="-1.4" y="-6.8" width="2.8" height="13.6" transform="rotate(90)"/><rect x="-1.4" y="-6.8" width="2.8" height="13.6" transform="rotate(135)"/><circle r="1.9" fill="#fafa4a"/></g>
</svg>
</body></html>
